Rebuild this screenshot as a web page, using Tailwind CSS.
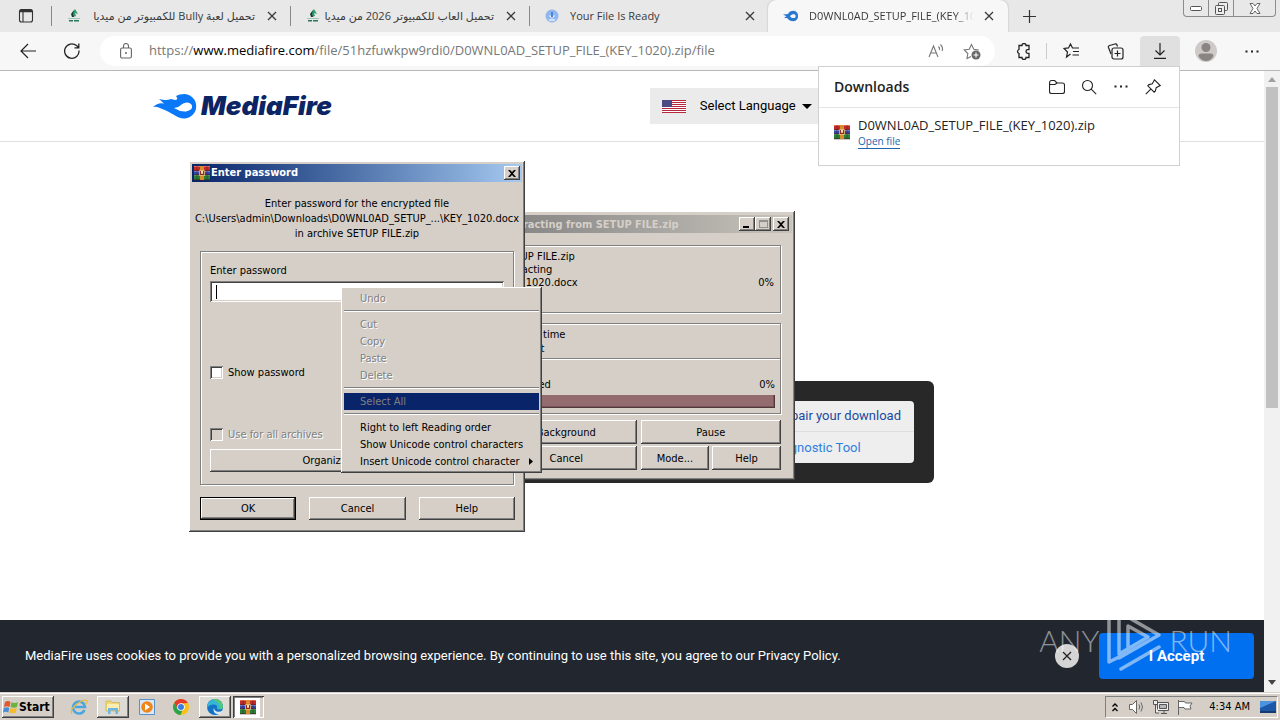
<!DOCTYPE html>
<html lang="en">
<head>
<meta charset="utf-8">
<meta name="viewport" content="width=device-width, initial-scale=1">
<title>MediaFire</title>
<script src="https://cdn.jsdelivr.net/npm/@tailwindcss/browser@4"></script>
</head>
<body class="bg-white font-['Open_Sans','DejaVu_Sans',sans-serif] text-black">
<svg class="hidden" aria-hidden="true">
  <symbol id="rar" viewBox="0 0 16 16">
    <path fill="#c22a2c" d="M0 1h16v5H0z"/><path fill="#ee6a50" d="M0 1h16v1H0z"/>
    <path fill="#3446a8" d="M0 6h16v4H0z"/><path fill="#6c84dc" d="M0 6h16v1H0z"/>
    <path fill="#218238" d="M0 10h16v5H0z"/><path fill="#5cbc62" d="M0 10h16v1H0z"/>
    <path fill="#3b1c1c" d="M0 5.500h16v.6H0zM0 9.600h16v.6H0zM0 14.400h16v.8H0z"/>
    <path fill="#5a1c1c" d="M2.500 1h1v14h-1zM12.500 1h1v14h-1z" opacity=".5"/>
    <path fill="#d98b2b" d="M6 1h4v14H6z"/><path fill="#f3e0b0" d="M5 5.500h6v5H5z"/>
    <path fill="none" stroke="#8d2a1c" stroke-width="1.300" d="M6.300 6v3.400h3.400V6"/>
  </symbol>
  <symbol id="x" viewBox="0 0 10 10"><path d="M1 1l8 8M9 1L1 9" fill="none" stroke="currentColor" stroke-width="1.300"/></symbol>
  <symbol id="wx" viewBox="0 0 8 7"><path d="M0 0h2l2 2 2-2h2L5 3.500 8 7H6L4 5 2 7H0l3-3.500z" fill="currentColor"/></symbol>
  <symbol id="dl" viewBox="0 0 16 16"><path fill="#2e9b6a" d="M9 1 6 5l1 4 3-1-1-3 3 1z"/><path fill="#1d3b33" d="M8 2 5 6l1 3h2l-1-3z"/><path fill="#9fc4b4" d="M2 10h12v1H2z"/><path fill="#29765a" d="M3 12h4v1.500H3zM8 12h5v1.500H8z"/></symbol>
</svg>

<div class="relative flex h-screen flex-col overflow-hidden">

  <!-- Tab strip -->
  <header class="relative flex h-8 shrink-0 items-center bg-[#e8e8e8] text-[11px] text-[#3a3a3a]">
    <button aria-label="Tab actions" class="flex w-[51px] shrink-0 justify-center text-[#333]">
      <svg class="size-4" viewBox="0 0 16 16" fill="none" stroke="currentColor" stroke-width="1.100"><rect x="1.500" y="1.500" width="13" height="12.500" rx="2"/><path stroke-width="2.500" d="M2 3h12"/><path d="M5 4v10"/></svg>
    </button>
    <div class="flex h-5 w-[239px] shrink-0 items-center gap-3 border-l border-[#888] pr-[13px] pl-[14px]">
      <svg class="size-4 shrink-0"><use href="#dl"/></svg>
      <span dir="rtl" class="min-w-0 flex-1 whitespace-nowrap">تحميل لعبة Bully للكمبيوتر من ميديا</span>
      <button aria-label="Close tab" class="shrink-0"><svg class="size-[10px]"><use href="#x"/></svg></button>
    </div>
    <div class="flex h-5 w-[239px] shrink-0 items-center gap-3 border-l border-[#888] pr-[13px] pl-[14px]">
      <svg class="size-4 shrink-0"><use href="#dl"/></svg>
      <span dir="rtl" class="min-w-0 flex-1 whitespace-nowrap">تحميل العاب للكمبيوتر 2026 من ميديا</span>
      <button aria-label="Close tab" class="shrink-0"><svg class="size-[10px]"><use href="#x"/></svg></button>
    </div>
    <div class="flex h-5 w-[239px] shrink-0 items-center gap-[10px] border-l border-[#888] pr-[13px] pl-[14px]">
      <svg class="size-4 shrink-0" viewBox="0 0 16 16"><circle cx="8" cy="8" r="6.500" fill="#8fb6ee"/><path d="M5.500 7.500 8 10l2.500-2.500M5 12h6" fill="none" stroke="#e8f1fd" stroke-width="1.300"/><path d="M8 4v5.500" stroke="#3878d8" stroke-width="1.600"/></svg>
      <span class="min-w-0 flex-1 truncate">Your File Is Ready</span>
      <button aria-label="Close tab" class="shrink-0"><svg class="size-[10px]"><use href="#x"/></svg></button>
    </div>
    <div class="flex h-8 w-60 shrink-0 items-center gap-[10px] rounded-t-lg bg-[#f7f7f7] pr-[14px] pl-[15px] shadow-[0_0_2px_#aaa] [clip-path:inset(-2px_-2px_0_-2px)]">
      <svg class="size-4 shrink-0" viewBox="0 0 16 16"><path fill="#2a78d0" fill-rule="evenodd" d="M0 6.500 5 6C6 4 8 2.800 10.500 2.800A5.300 5.300 0 0 1 10.500 13.300C7.500 13.300 5.500 12 4.500 10.300L1 9.800 3.500 8.300zM7 8.200C8.500 10.500 12.500 11 12.700 8.200 12.500 5.500 9 5.800 7 8.200z"/></svg>
      <span class="min-w-0 flex-1 overflow-hidden whitespace-nowrap [mask-image:linear-gradient(to_right,#000_88%,transparent)]">D0WNL0AD_SETUP_FILE_(KEY_1020).zip</span>
      <button aria-label="Close tab" class="shrink-0"><svg class="size-[10px]"><use href="#x"/></svg></button>
    </div>
    <button aria-label="New tab" class="ml-[14px] text-[#333]"><svg class="size-[15px]" viewBox="0 0 15 15"><path d="M7.500 1v13M1 7.500h13" stroke="currentColor" stroke-width="1.200"/></svg></button>
    <div class="mr-1 ml-auto flex h-[17px] self-start rounded-b border border-t-0 border-[#8c8c8c] text-[#555]">
      <button aria-label="Minimize" class="flex w-[25px] items-center justify-center border-r border-[#8c8c8c]"><svg class="h-[5px] w-3" viewBox="0 0 12 5"><rect x=".5" y=".5" width="11" height="4" rx="1" fill="#fff" stroke="currentColor"/></svg></button>
      <button aria-label="Restore" class="flex w-[25px] items-center justify-center border-r border-[#8c8c8c]"><svg class="size-[13px]" viewBox="0 0 13 13" fill="#eee" stroke="currentColor"><rect x="3.500" y=".5" width="9" height="8" rx="1"/><rect x=".5" y="3.500" width="9" height="9" rx="1"/><rect x="3.500" y="6.500" width="3" height="3"/></svg></button>
      <button aria-label="Close" class="flex w-[41px] items-center justify-center"><svg class="h-[11px] w-3" viewBox="0 0 12 11"><path d="M1 .5h3l2 2.500 2-2.500h3L8 5.500l3 5H8L6 8l-2 2.500H1l3-5z" fill="#fff" stroke="currentColor" stroke-width=".9"/></svg></button>
    </div>
  </header>

  <!-- Toolbar -->
  <nav class="flex h-[39px] shrink-0 items-center border-b border-[#b8b8b8] bg-[#f7f7f7] text-[#222]">
    <button aria-label="Back" class="ml-5"><svg class="size-4" viewBox="0 0 16 16" fill="none" stroke="currentColor" stroke-width="1.200"><path d="M16 8H1M8 1 1 8l7 7"/></svg></button>
    <button aria-label="Reload" class="ml-7"><svg class="size-4" viewBox="0 0 16 16" fill="none" stroke="currentColor" stroke-width="1.300"><path d="M15 7.500A7.200 7.200 0 1 1 12.500 2.600L14.500 4.500M14.800.5v4.300h-4.300"/></svg></button>
    <div class="ml-5 flex h-[30px] flex-1 items-center rounded-full bg-white pr-[14px] pl-5 text-[#777]">
      <svg class="h-4 w-3" viewBox="0 0 12 16" fill="none" stroke="#666" stroke-width="1.100"><rect x=".6" y="5" width="10.800" height="10" rx="1.500"/><path d="M3.500 5V3a2.500 2.500 0 0 1 5 0v2"/><path d="M5 10h2" stroke-width="1.600"/></svg>
      <span class="ml-[17px] flex-1 text-[13px] whitespace-nowrap">https://<span class="text-black">www.mediafire.com</span>/file/51hzfuwkpw9rdi0/D0WNL0AD_SETUP_FILE_(KEY_1020).zip/file</span>
      <button aria-label="Read aloud"><svg class="h-4 w-[18px]" viewBox="0 0 18 16" fill="none" stroke="#777" stroke-width="1.100"><path d="m2 14 4.500-11L11 14M3.700 10h5.600M11.500 3.500q1.500 1.500 1 3.500M13.500 1.500q3 3 1.500 6.500"/></svg></button>
      <button aria-label="Add to favorites" class="ml-[18px]"><svg class="size-[18px]" viewBox="0 0 18 18" fill="none" stroke="#777" stroke-width="1.100"><path d="M8 14.500 4 16.500l.8-5L1.200 8l5-.7L8.500 2.500l2.300 4.800 5 .7"/><circle cx="13" cy="13" r="4.500" fill="#666" stroke="none"/><path stroke="#fff" d="M13 10.500v5M10.500 13h5"/></svg></button>
    </div>
    <button aria-label="Extensions" class="ml-5"><svg class="size-[17px]" viewBox="0 0 17 17" fill="none" stroke="currentColor" stroke-width="1.300"><path d="M4 2.500h3a2 2 0 0 1 4 0h3v4.200h-1.200a1.800 1.800 0 0 0 0 3.600H14v4.200h-3a2 2 0 0 1-4 0H4v-4a2.100 2.100 0 0 1 0-4z"/></svg></button>
    <span class="ml-[14px] h-4 w-px bg-[#ccc]"></span>
    <button aria-label="Favorites" class="ml-4"><svg class="h-4 w-[17px]" viewBox="0 0 17 16" fill="none" stroke="currentColor" stroke-width="1.200"><path d="M7.500 11 3.500 14l1-5L1 5.500l4.500-.6L7.500 1l2 4h6.500M10 8.500h6M9.500 12h6.500"/></svg></button>
    <button aria-label="Collections" class="ml-[27px]"><svg class="size-[17px]" viewBox="0 0 17 17" fill="none" stroke="currentColor" stroke-width="1.200"><path d="M4 11 1.500 4.500Q1 3 2.500 2.500L8 1q1.500-.4 2 1l.5 1.500"/><rect x="5" y="5" width="11" height="11" rx="2"/><path d="M10.500 7.500v6M7.500 10.500h6"/></svg></button>
    <button aria-label="Downloads" class="ml-4 flex h-[31px] w-10 items-center justify-center rounded-t bg-[#e0e0e0]"><svg class="h-4 w-3" viewBox="0 0 12 16" fill="none" stroke="currentColor" stroke-width="1.200"><path d="M6 0v11.500M1.500 7.500 6 12l4.500-4.500M0 15.300h12"/></svg></button>
    <button aria-label="Profile" class="ml-[15px]"><svg class="size-[22px]" viewBox="0 0 22 22"><circle cx="11" cy="11" r="11" fill="#cfcac8"/><circle cx="11" cy="7.500" r="4.500" fill="#8a8583"/><path d="M3.500 16q0-2.500 3-2.500h9q3 0 3 2.500-2.500 5-7.500 5t-7.500-5z" fill="#8a8583"/></svg></button>
    <button aria-label="Settings and more" class="mr-[21px] ml-7"><svg class="h-[3px] w-[14px]" viewBox="0 0 14 3"><path d="M.5.500h2v2h-2zM6 .500h2v2H6zM11.500.500h2v2h-2z" fill="currentColor"/></svg></button>
  </nav>

  <!-- Page -->
  <div class="flex min-h-0 flex-1">
    <main class="flex min-w-0 flex-1 flex-col font-['Roboto','Liberation_Sans',sans-serif]">
      <div class="flex h-[71px] shrink-0 items-center border-b border-[#e0e0e0] pl-[153px]">
        <a href="#" aria-label="MediaFire" class="flex items-center gap-[2px] text-[#0d2464]">
          <svg class="h-[26px] w-[46px]" viewBox="0 0 46 26"><path fill="#0b78f8" fill-rule="evenodd" d="M0 14Q5 9 11 10.500L6 6Q13 8 18 6L22 7Q26 7 23 3Q26 1 32 1A12.300 12.300 0 0 1 32 25.500C24 26 19 19 8 15.500Q4 13 0 14zM21 15Q27 19 33 18.500 40 17 39 12.500C37 8 31 9 28 12q-3 3-7 3z"/></svg>
          <span class="text-[26px] leading-none font-black italic font-['Inter','Liberation_Sans',sans-serif]">MediaFire</span>
        </a>
        <button class="ml-[318px] flex h-9 w-[180px] items-center bg-[#ebebec] pl-3 text-[13px]">
          <svg class="h-[13px] w-6" viewBox="0 0 24 13"><path fill="#fff" d="M0 0h24v13H0z"/><path stroke="#b8283c" d="M0 .5h24M0 2.500h24M0 4.500h24M0 6.500h24M0 8.500h24M0 10.500h24M0 12.500h24"/><path fill="#4a4a84" d="M0 0h10v7H0z"/></svg>
          <span class="ml-[14px] whitespace-nowrap">Select Language</span>
          <svg class="ml-[6px] h-[5px] w-[10px]" viewBox="0 0 10 5"><path d="M0 0h10L5 5z"/></svg>
        </button>
      </div>
      <div class="ml-[330px] mt-[239px] w-[604px] rounded-md bg-[#282828] p-5 text-[13px]">
        <div class="ml-auto w-[160px] rounded bg-[#eeeeee]">
          <a href="#" class="flex h-[31px] items-center border-b border-[#ddd] pl-[22px] whitespace-nowrap text-[#1b4aa0]">Repair your download</a>
          <a href="#" class="flex h-[31px] items-center pl-[17px] whitespace-nowrap text-[#2f7fe0]">Diagnostic Tool</a>
        </div>
      </div>
      <div class="relative mt-auto flex h-[72px] shrink-0 items-center bg-[#22272f] pr-[10px] pl-[25px] text-white">
        <p class="flex-1 text-[13px] whitespace-nowrap">MediaFire uses cookies to provide you with a personalized browsing experience. By continuing to use this site, you agree to our Privacy Policy.</p>
        <button aria-label="Dismiss" class="mr-5 flex size-6 items-center justify-center rounded-full bg-[#d4d4d4] text-[#222]"><svg class="size-[10px]"><use href="#x"/></svg></button>
        <button class="h-[46px] w-[155px] rounded bg-[#0070f0] text-[15px] font-bold">I Accept</button>
        <!-- Recorder watermark -->
        <div class="pointer-events-none absolute right-8 bottom-5 flex items-center gap-2 text-[30px] leading-8 font-light text-white/50 font-['Lato',sans-serif]">
          <span>ANY</span>
          <svg class="h-16 w-[54px]" viewBox="0 0 54 64" fill="none" stroke="#fff" stroke-opacity=".5" stroke-width="3.500" stroke-linejoin="round" stroke-linecap="round"><path d="M12 44V4L52 27 12 50M2 9V54L12 49M2 9 7 8M14 61 52 39M21 42V18L41 29 12 46"/></svg>
          <span>RUN</span>
        </div>
      </div>
    </main>
    <div class="flex w-4 shrink-0 flex-col items-center bg-[#f1f1f1]">
      <svg class="mt-[6px] h-[5px] w-2" viewBox="0 0 8 5"><path d="M0 5h8L4 0z" fill="#a0a0a0"/></svg>
      <div class="mt-[5px] h-[321px] w-3 bg-[#c1c1c1]"></div>
      <svg class="mt-auto mb-[7px] h-[5px] w-2" viewBox="0 0 8 5"><path d="M0 0h8L4 5z" fill="#444"/></svg>
    </div>
  </div>

  <!-- Taskbar -->
  <footer class="flex h-7 shrink-0 items-center border-t border-[#d5cfc8] bg-[#d5cfc8] pt-px pl-[2px] font-['DejaVu_Sans_Condensed','Noto_Sans',sans-serif] text-[11px] leading-4 shadow-[inset_0_1px_#fff]">
    <button class="flex h-[22px] w-[52px] items-center bg-[#d5cfc8] pl-px font-bold shadow-[inset_-1px_-1px_#404040,inset_1px_1px_#fff,inset_-2px_-2px_#808080]">
      <svg class="size-4 shrink-0" viewBox="0 0 16 16"><path fill="#e5562a" d="M2 3q3-2 5.500 0L6.500 8Q4 6.500 1 8z"/><path fill="#6cb33f" d="M8.500 3.200q3 1.500 6.500 0L14 8q-3 1.500-6.500 0z"/><path fill="#4a8bd8" d="M.8 9Q4 7.500 6.300 9L5.300 13.500Q3 12 0 13.500z"/><path fill="#f4bb2c" d="M7.300 9q3 1.500 6.500 0l-1 4.500q-3 1.500-6.500 0z"/></svg><span class="text-xs">Start</span>
    </button>
    <button aria-label="Internet Explorer" class="ml-4"><svg class="size-[18px]" viewBox="0 0 18 18" fill="none"><path d="M14.500 12A6 6 0 1 1 15 9H5" stroke="#4aa6e0" stroke-width="2.600"/><path d="M2 16Q-1 12 7 6t10-3q1 1-2 4" stroke="#e8b93a" stroke-width="1.200"/></svg></button>
    <button aria-label="File Explorer" class="ml-[9px] flex h-[22px] w-8 items-center justify-center bg-[#dedad4] shadow-[inset_-1px_-1px_#404040,inset_1px_1px_#fff,inset_-2px_-2px_#808080]"><svg class="size-4" viewBox="0 0 16 16"><path fill="#f0d878" stroke="#c8a848" stroke-width=".6" d="M1 2h5l1 1.500h7.500V12H1z"/><path fill="#fbeeb0" d="M2 5h12v6H2z"/><path fill="#6db5e2" d="M3 9h10v6h-2.500v-3.500h-5V15H3z"/></svg></button>
    <button aria-label="Media Player" class="ml-[10px]"><svg class="size-4" viewBox="0 0 16 16"><path fill="#d8e8f6" stroke="#5a92c8" d="M.5.5h15v15H.5z"/><circle cx="8" cy="8" r="5.800" fill="#f08519"/><path fill="#fff" d="m6 4.500 5 3.500-5 3.500z"/></svg></button>
    <button aria-label="Chrome" class="ml-[18px]"><svg class="size-4" viewBox="0 0 16 16"><circle cx="8" cy="8" r="8" fill="#fbc116"/><path fill="#e33b2e" d="M1.100 4A8 8 0 0 1 14.900 4L8 4.500 4.500 9.500z"/><path fill="#2ba24c" d="M1.100 4 4.800 10 9.500 11.300 7.500 16A8 8 0 0 1 1.100 4z"/><circle cx="8" cy="8" r="3.800" fill="#fff"/><circle cx="8" cy="8" r="3" fill="#3a7de8"/></svg></button>
    <button aria-label="Edge" class="ml-[10px] flex h-[22px] w-8 items-center justify-center bg-[#dedad4] shadow-[inset_-1px_-1px_#404040,inset_1px_1px_#fff,inset_-2px_-2px_#808080]"><svg class="size-4" viewBox="0 0 16 16"><circle cx="8" cy="8" r="8" fill="#1272c4"/><path fill="#37b7d6" d="M0 8A8 8 0 0 1 15.900 7Q16 10.500 12 10.500 9.500 10.500 10 9 10.500 5.500 6.500 5.500 2 5.500 0 9z"/><path fill="#54c872" d="M8 0a8 8 0 0 1 7.900 7Q16 10 13 10.300 14 3 5 .6z"/><path fill="#fff" d="M7 8.500Q7 12.500 11.500 12.800 14 12.700 15.500 11.500 14 15 11 15.300 5 14 7 8.500z" opacity=".85"/></svg></button>
    <button aria-label="WinRAR" class="ml-[2px] flex h-[22px] w-[31px] items-center justify-center bg-white pr-[2px] shadow-[inset_1px_1px_#404040,inset_-1px_-1px_#fff,inset_2px_2px_#808080,inset_-4px_0_#d5cfc8]"><svg class="size-4"><use href="#rar"/></svg></button>
    <div class="mr-[2px] ml-auto flex h-[22px] items-center border border-[#808080] border-r-white border-b-white pl-[6px] pr-px">
      <svg class="h-[9px] w-[6px]" viewBox="0 0 6 9" fill="none" stroke="#000" stroke-width="1.300"><path d="m.5 3.500 2.500-2.500 2.500 2.500M.5 8 3 5.500 5.500 8"/></svg>
      <svg class="ml-[11px] h-[14px] w-4" viewBox="0 0 16 14" fill="#fff" stroke="#666"><path d="M.5 4.500h3L7.500.5v13l-4-4h-3z"/><path fill="none" d="M10 4.500q1.500 2.500 0 5M12 2.500q3 4.500 0 9"/></svg>
      <svg class="ml-2 size-4" viewBox="0 0 16 16" fill="#eee" stroke="#555"><path d="M4.500 3.500h11v8h-11z"/><path fill="#b8b8b8" d="M6.500 5.500h7v4h-7z"/><path d="M8 14.500h6M11 12v2M.5 1.500h4v4h-4zM2.500 6v8H6"/></svg>
      <svg class="ml-2 h-[15px] w-4" viewBox="0 0 16 15" fill="#fff" stroke="#666"><path d="M1.500 0v15M1.500 1.500h6l1 1.500h6.500l-2 3 1 3h-6l-1-1.500H1.500z"/></svg>
      <span class="ml-4 whitespace-nowrap">4:34 AM</span>
      <svg class="ml-[10px] h-3 w-4" viewBox="0 0 16 12"><path fill="#1c57a8" d="M0 0h16v12H0z"/><path fill="#4b95e0" d="M0 0h16L0 7z"/><path fill="#153a70" d="M0 10h16v2H0z"/></svg>
    </div>
  </footer>

  <!-- Downloads flyout -->
  <section class="absolute top-[66px] right-[100px] w-[362px] border border-[#d0d0d0] bg-white text-[#222]">
    <div class="flex h-[41px] items-center border-b border-[#e4e4e4] pr-[18px] pl-[15px]">
      <h2 class="flex-1 text-sm font-semibold">Downloads</h2>
      <div class="flex items-center gap-4">
        <button aria-label="Open folder" class="flex"><svg class="size-4" viewBox="0 0 16 16" fill="none" stroke="currentColor" stroke-width="1.100"><path d="M.6 4.500V3.500q0-2 2-2h3L8 4h5.500q2 0 2 2v6.500q0 2-2 2h-11q-2 0-2-2zM.6 5.500H6L8 4"/></svg></button>
        <button aria-label="Search" class="flex"><svg class="size-4" viewBox="0 0 16 16" fill="none" stroke="currentColor" stroke-width="1.100"><circle cx="6.500" cy="6.500" r="5"/><path d="m10.200 10.200 5 5"/></svg></button>
        <button aria-label="More" class="flex"><svg class="size-4" viewBox="0 0 16 16"><path d="M1.500 6.500h2v2h-2zM7 6.500h2v2H7zM12.500 6.500h2v2h-2z" fill="currentColor"/></svg></button>
        <button aria-label="Pin" class="flex"><svg class="size-4" viewBox="0 0 16 16" fill="none" stroke="currentColor" stroke-width="1.100"><path d="m9.500.8 5.700 5.700-4 2.200-.8 3.300-1.200 1.200-6.400-6.400L4 5.600l3.300-.8zM5.800 10.200.8 15.200"/></svg></button>
      </div>
    </div>
    <div class="flex h-[57px] items-start gap-2 pt-2 pl-[15px]">
      <svg class="mt-2 size-4"><use href="#rar"/></svg>
      <div>
        <p class="text-[13px] leading-[18px]">D0WNL0AD_SETUP_FILE_(KEY_1020).zip</p>
        <a href="#" class="block w-fit border-b border-[#1a66b0] text-[10px] leading-[14px] text-[#1a66b0]">Open file</a>
      </div>
    </div>
  </section>

  <!-- Extraction progress window -->
  <section class="absolute top-[211px] left-[483px] w-[312px] bg-[#d5cfc8] p-[3px] pb-[10px] font-['DejaVu_Sans_Condensed','Noto_Sans',sans-serif] text-[11px] leading-[13px] shadow-[inset_-1px_-1px_#404040,inset_1px_1px_#fff,inset_-2px_-2px_#808080]">
    <div class="mt-px flex h-[18px] items-center bg-linear-to-r from-[#808080] to-[#c8c4bc] pr-[3px] pl-[2px] font-bold text-[#d5cfc8]">
      <svg class="size-4"><use href="#rar"/></svg>
      <h2 class="ml-px flex-1 whitespace-nowrap">Extracting from SETUP FILE.zip</h2>
      <button aria-label="Minimize" class="flex h-[14px] w-4 items-end justify-start bg-[#d5cfc8] pb-[3px] pl-1 shadow-[inset_-1px_-1px_#404040,inset_1px_1px_#fff,inset_-2px_-2px_#808080]"><span class="h-[2px] w-[6px] bg-black"></span></button>
      <button aria-label="Maximize" disabled class="flex h-[14px] w-4 items-center justify-center bg-[#d5cfc8] shadow-[inset_-1px_-1px_#404040,inset_1px_1px_#fff,inset_-2px_-2px_#808080]"><span class="h-2 w-[9px] border border-t-2 border-[#909090]"></span></button>
      <button aria-label="Close" class="ml-[2px] flex h-[14px] w-4 items-center justify-center bg-[#d5cfc8] text-black shadow-[inset_-1px_-1px_#404040,inset_1px_1px_#fff,inset_-2px_-2px_#808080]"><svg class="h-[7px] w-2"><use href="#wx"/></svg></button>
    </div>
    <div class="mr-[11px] ml-[10px] mt-3">
      <div class="h-[68px] border border-[#808080] pt-1 pr-[6px] pl-[5px] shadow-[1px_1px_#fff,inset_1px_1px_#fff]">
        <p>SETUP FILE.zip</p>
        <p>extracting</p>
        <p class="flex justify-between"><span>KEY_1020.docx</span><span>0%</span></p>
      </div>
      <div class="mt-[10px] h-[36px] border border-[#808080] pt-1 pr-[6px] pl-1 leading-[14px] shadow-[1px_1px_#fff,inset_1px_1px_#fff]">
        <p>Elapsed time</p>
        <p>Time left</p>
      </div>
      <div class="h-[55px] border border-t-0 border-[#808080] pt-[19px] pr-[5px] pl-1 shadow-[1px_1px_#fff,inset_1px_1px_#fff]">
        <p class="flex justify-between"><span>Processed</span><span>0%</span></p>
        <div role="progressbar" aria-label="Processed" aria-valuenow="0" class="mt-1 h-[13px] border-r border-b border-[#50383a] bg-[#946c70] shadow-[inset_-1px_-1px_#7a565a]"></div>
      </div>
      <div class="mt-[6px] grid grid-cols-2 gap-x-1 gap-y-[2px]">
        <button class="h-6 bg-[#d5cfc8] shadow-[inset_-1px_-1px_#404040,inset_1px_1px_#fff,inset_-2px_-2px_#808080]">Background</button>
        <button class="h-6 bg-[#d5cfc8] shadow-[inset_-1px_-1px_#404040,inset_1px_1px_#fff,inset_-2px_-2px_#808080]">Pause</button>
        <button class="h-6 bg-[#d5cfc8] shadow-[inset_-1px_-1px_#404040,inset_1px_1px_#fff,inset_-2px_-2px_#808080]">Cancel</button>
        <div class="grid grid-cols-2 gap-[3px]">
          <button class="h-6 bg-[#d5cfc8] shadow-[inset_-1px_-1px_#404040,inset_1px_1px_#fff,inset_-2px_-2px_#808080]">Mode...</button>
          <button class="h-6 bg-[#d5cfc8] shadow-[inset_-1px_-1px_#404040,inset_1px_1px_#fff,inset_-2px_-2px_#808080]">Help</button>
        </div>
      </div>
    </div>
  </section>

  <!-- Password dialog -->
  <section class="absolute top-[161px] left-[189px] w-[336px] bg-[#d5cfc8] p-[3px] pb-3 font-['DejaVu_Sans_Condensed','Noto_Sans',sans-serif] text-[11px] leading-[14px] shadow-[inset_-1px_-1px_#404040,inset_1px_1px_#fff,inset_-2px_-2px_#808080]">
    <div class="flex h-[18px] items-center bg-linear-to-r from-[#0a246a] to-[#a6caf0] pr-[2px] pl-[2px] font-bold text-white">
      <svg class="size-4"><use href="#rar"/></svg>
      <h2 class="ml-px flex-1">Enter password</h2>
      <button aria-label="Close" class="flex h-[14px] w-4 items-center justify-center bg-[#d5cfc8] text-black shadow-[inset_-1px_-1px_#404040,inset_1px_1px_#fff,inset_-2px_-2px_#808080]"><svg class="h-[7px] w-2"><use href="#wx"/></svg></button>
    </div>
    <p class="mt-[14px] text-center leading-[15px] whitespace-nowrap">Enter password for the encrypted file<br>C:\Users\admin\Downloads\D0WNL0AD_SETUP_...\KEY_1020.docx<br>in archive SETUP FILE.zip</p>
    <div class="mt-[10px] mr-2 ml-2 h-[234px] border border-[#808080] px-[9px] pt-3 shadow-[1px_1px_#fff,inset_1px_1px_#fff]">
      <label for="pw" class="block">Enter password</label>
      <div class="mt-[3px] flex h-[21px] items-center bg-white pl-[6px] shadow-[inset_1px_1px_#808080,inset_-1px_-1px_#fff,inset_2px_2px_#404040,inset_-2px_-2px_#d5cfc8]">
        <span class="h-[14px] w-px bg-black"></span><input id="pw" type="text" class="min-w-0 flex-1 bg-transparent outline-none">
      </div>
      <label class="mt-16 flex h-[14px] items-start gap-[5px] leading-[13px]"><input type="checkbox" class="size-[13px] appearance-none bg-white shadow-[inset_1px_1px_#808080,inset_-1px_-1px_#fff,inset_2px_2px_#404040,inset_-2px_-2px_#d5cfc8]">Show password</label>
      <label class="mt-12 flex h-[14px] items-start gap-[5px] leading-[13px] text-[#808080] [text-shadow:1px_1px_0_#fff]"><input type="checkbox" disabled class="size-[13px] appearance-none bg-[#d5cfc8] shadow-[inset_1px_1px_#808080,inset_-1px_-1px_#fff,inset_2px_2px_#404040]">Use for all archives</label>
      <button class="mt-[7px] h-[23px] w-full bg-[#d5cfc8] shadow-[inset_-1px_-1px_#404040,inset_1px_1px_#fff,inset_-2px_-2px_#808080]">Organize passwords...</button>
    </div>
    <div class="mt-3 mr-[7px] ml-2 grid grid-cols-3 gap-[13px]">
      <button class="h-[23px] border border-black bg-[#d5cfc8] shadow-[inset_-1px_-1px_#404040,inset_1px_1px_#fff,inset_-2px_-2px_#808080]">OK</button>
      <button class="h-[23px] bg-[#d5cfc8] shadow-[inset_-1px_-1px_#404040,inset_1px_1px_#fff,inset_-2px_-2px_#808080]">Cancel</button>
      <button class="h-[23px] bg-[#d5cfc8] shadow-[inset_-1px_-1px_#404040,inset_1px_1px_#fff,inset_-2px_-2px_#808080]">Help</button>
    </div>
  </section>

  <!-- Context menu -->
  <div role="menu" class="absolute top-[287px] left-[341px] flex w-[201px] flex-col bg-[#d5cfc8] p-[3px] font-['DejaVu_Sans_Condensed','Noto_Sans',sans-serif] text-[11px] leading-[17px] shadow-[inset_-1px_-1px_#404040,inset_1px_1px_#fff,inset_-2px_-2px_#808080]">
    <button role="menuitem" class="h-[17px] pl-4 text-left text-[#808080] [text-shadow:1px_1px_0_#fff]">Undo</button>
    <hr class="my-[3px] border-t border-[#808080] shadow-[0_1px_#fff]">
    <div class="mt-[2px] flex flex-col">
      <button role="menuitem" class="h-[17px] pl-4 text-left text-[#808080] [text-shadow:1px_1px_0_#fff]">Cut</button>
      <button role="menuitem" class="h-[17px] pl-4 text-left text-[#808080] [text-shadow:1px_1px_0_#fff]">Copy</button>
      <button role="menuitem" class="h-[17px] pl-4 text-left text-[#808080] [text-shadow:1px_1px_0_#fff]">Paste</button>
      <button role="menuitem" class="h-[17px] pl-4 text-left text-[#808080] [text-shadow:1px_1px_0_#fff]">Delete</button>
    </div>
    <hr class="my-[3px] border-t border-[#808080] shadow-[0_1px_#fff]">
    <button role="menuitem" class="mt-[2px] h-[17px] bg-[#0a246a] pl-4 text-left text-[#808080]">Select All</button>
    <hr class="my-[3px] border-t border-[#808080] shadow-[0_1px_#fff]">
    <div class="mt-[2px] flex flex-col">
      <button role="menuitem" class="h-[17px] pl-4 text-left whitespace-nowrap">Right to left Reading order</button>
      <button role="menuitem" class="h-[17px] pl-4 text-left whitespace-nowrap">Show Unicode control characters</button>
      <button role="menuitem" class="flex h-[17px] items-center justify-between pr-[6px] pl-4 text-left whitespace-nowrap">Insert Unicode control character<svg class="h-[7px] w-1" viewBox="0 0 4 7"><path d="M0 0v7l4-3.500z"/></svg></button>
    </div>
  </div>
</div>
</body>
</html>
